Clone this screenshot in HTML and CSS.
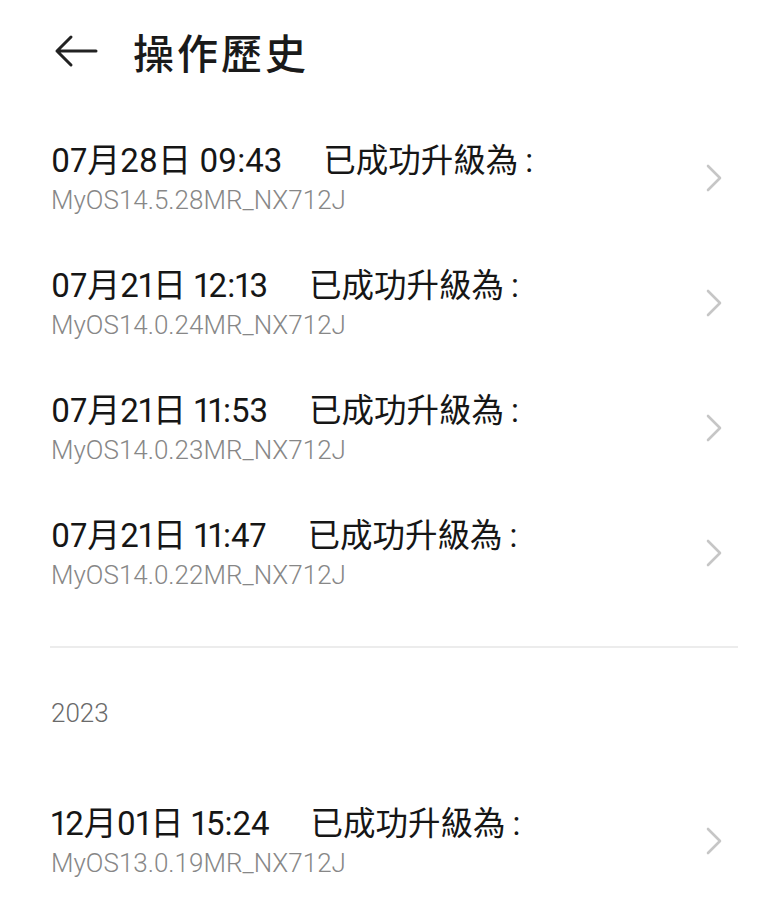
FILE: index.html
```html
<!DOCTYPE html>
<html lang="zh-Hant">
<head>
<meta charset="utf-8">
<title>操作歷史</title>
<link rel="stylesheet" href="styles.css">
</head>
<body>
<div class="page">
  <header class="header">
    <svg class="back" width="44" height="34" viewBox="0 0 44 34">
      <path d="M17 3 L3 17 L17 31 M3 17 H42" fill="none" stroke="#222" stroke-width="3" stroke-linecap="round" stroke-linejoin="round"/>
    </svg>
    <h1 class="title">操作歷史</h1>
  </header>
  <ul class="list">
    <li class="row">
      <div class="text">
        <div class="main"><span class="time">07月28日 09:43</span><span class="msg">已成功升級為<span class="colon">:</span></span></div>
        <div class="sub">MyOS14.5.28MR_NX712J</div>
      </div>
      <svg class="chev" width="16" height="28" viewBox="0 0 16 28"><path d="M2 2 L14 14 L2 26" fill="none" stroke="#c6c6c6" stroke-width="2.6" stroke-linecap="round" stroke-linejoin="round"/></svg>
    </li>
    <li class="row">
      <div class="text">
        <div class="main"><span class="time">07月21日 12:13</span><span class="msg">已成功升級為<span class="colon">:</span></span></div>
        <div class="sub">MyOS14.0.24MR_NX712J</div>
      </div>
      <svg class="chev" width="16" height="28" viewBox="0 0 16 28"><path d="M2 2 L14 14 L2 26" fill="none" stroke="#c6c6c6" stroke-width="2.6" stroke-linecap="round" stroke-linejoin="round"/></svg>
    </li>
    <li class="row">
      <div class="text">
        <div class="main"><span class="time">07月21日 11:53</span><span class="msg">已成功升級為<span class="colon">:</span></span></div>
        <div class="sub">MyOS14.0.23MR_NX712J</div>
      </div>
      <svg class="chev" width="16" height="28" viewBox="0 0 16 28"><path d="M2 2 L14 14 L2 26" fill="none" stroke="#c6c6c6" stroke-width="2.6" stroke-linecap="round" stroke-linejoin="round"/></svg>
    </li>
    <li class="row">
      <div class="text">
        <div class="main"><span class="time">07月21日 11:47</span><span class="msg">已成功升級為<span class="colon">:</span></span></div>
        <div class="sub">MyOS14.0.22MR_NX712J</div>
      </div>
      <svg class="chev" width="16" height="28" viewBox="0 0 16 28"><path d="M2 2 L14 14 L2 26" fill="none" stroke="#c6c6c6" stroke-width="2.6" stroke-linecap="round" stroke-linejoin="round"/></svg>
    </li>
  </ul>
  <div class="divider"></div>
  <div class="year">2023</div>
  <ul class="list">
    <li class="row">
      <div class="text">
        <div class="main"><span class="time">12月01日 15:24</span><span class="msg">已成功升級為<span class="colon">:</span></span></div>
        <div class="sub">MyOS13.0.19MR_NX712J</div>
      </div>
      <svg class="chev" width="16" height="28" viewBox="0 0 16 28"><path d="M2 2 L14 14 L2 26" fill="none" stroke="#c6c6c6" stroke-width="2.6" stroke-linecap="round" stroke-linejoin="round"/></svg>
    </li>
  </ul>
</div>
</body>
</html>
```
FILE: styles.css
```css
html, body {
  margin: 0;
  padding: 0;
  background: #ffffff;
}
body {
  font-family: Roboto, "Noto Sans CJK TC", "Noto Sans", sans-serif;
  color: #111111;
}
.page {
  width: 780px;
  height: 902px;
  overflow: hidden;
}
.header {
  height: 102px;
  display: flex;
  align-items: center;
  padding-left: 54px;
  box-sizing: border-box;
}
.back {
  display: block;
  flex: none;
}
.title {
  margin: 0 0 0 35px;
  font-family: "Noto Sans CJK TC", sans-serif;
  font-size: 41px;
  font-weight: 500;
  letter-spacing: 3px;
  line-height: 50px;
  color: #1a1a1a;
}
.list {
  list-style: none;
  margin: 0;
  padding: 0;
}
.header + .list {
  padding-top: 13px;
}
.row {
  height: 125px;
  display: flex;
  align-items: center;
  padding: 0 58px 0 51px;
}
.text {
  flex: 1;
}
.main {
  font-size: 33px;
  line-height: 40px;
  color: #161616;
  white-space: nowrap;
  font-variant-numeric: proportional-nums;
  font-feature-settings: "pnum" 1;
}
.msg {
  margin-left: 41px;
  font-family: "Noto Sans CJK TC", sans-serif;
  font-size: 32.5px;
}
.colon {
  font-family: Roboto, sans-serif;
  margin-left: 7px;
}
.sub {
  margin-top: 2px;
  font-size: 26px;
  font-weight: 300;
  line-height: 34px;
  color: #878787;
}
.chev {
  display: block;
  flex: none;
}
.divider {
  margin: 31px 42px 0 50px;
  height: 2px;
  background: #ececec;
}
.year {
  margin: 48px 0 0 51px;
  font-size: 26px;
  font-weight: 300;
  line-height: 34px;
  color: #6a6a6a;
}
.year + .list {
  margin-top: 48px;
}
```
